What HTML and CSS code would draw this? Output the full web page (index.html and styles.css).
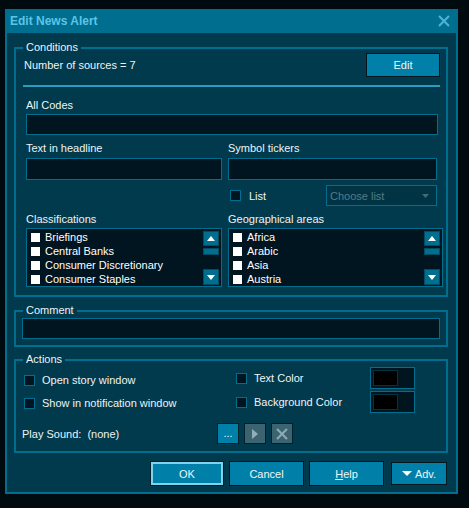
FILE: index.html
```html
<!DOCTYPE html>
<html>
<head>
<meta charset="utf-8">
<link rel="stylesheet" href="styles.css">
</head>
<body>
<div class="window">
  <div class="titlebar">
    <span class="title">Edit News Alert</span>
    <svg class="close" width="12" height="12" viewBox="0 0 12 12"><path d="M1 1L11 11M11 1L1 11" stroke="#4ab2d2" stroke-width="2.2"/></svg>
  </div>
  <div class="body">
    <div class="group conditions">
      <span class="legend">Conditions</span>
      <div class="src-row">
        <span>Number of sources = 7</span>
        <div class="btn edit">Edit</div>
      </div>
      <div class="sep"></div>
      <div class="field full">
        <div class="label">All Codes</div>
        <div class="input h21"></div>
      </div>
      <div class="cols">
        <div class="col col-left">
          <div class="label lb3">Text in headline</div>
          <div class="input"></div>
        </div>
        <div class="col col-right">
          <div class="label lb3">Symbol tickers</div>
          <div class="input"></div>
          <div class="list-row">
            <span class="cb"></span>
            <span class="cb-text">List</span>
            <div class="dropdown">
              <span>Choose list</span>
              <svg width="7" height="4" viewBox="0 0 7 4"><path d="M0 0H7L3.5 4Z" fill="#3d6c7c"/></svg>
            </div>
          </div>
        </div>
      </div>
      <div class="cols lists">
        <div class="col col-left">
          <div class="label">Classifications</div>
          <div class="listbox">
            <div class="items">
              <div class="item"><span class="wcb"></span>Briefings</div>
              <div class="item"><span class="wcb"></span>Central Banks</div>
              <div class="item"><span class="wcb"></span>Consumer Discretionary</div>
              <div class="item"><span class="wcb"></span>Consumer Staples</div>
            </div>
            <div class="scrollbar">
              <div class="sb-btn up"><svg width="8" height="5" viewBox="0 0 8 5"><path d="M0 5H8L4 0Z" fill="#fff"/></svg></div>
              <div class="sb-thumb"></div>
              <div class="sb-btn down"><svg width="8" height="5" viewBox="0 0 8 5"><path d="M0 0H8L4 5Z" fill="#fff"/></svg></div>
            </div>
          </div>
        </div>
        <div class="col col-right wide">
          <div class="label">Geographical areas</div>
          <div class="listbox">
            <div class="items">
              <div class="item"><span class="wcb"></span>Africa</div>
              <div class="item"><span class="wcb"></span>Arabic</div>
              <div class="item"><span class="wcb"></span>Asia</div>
              <div class="item"><span class="wcb"></span>Austria</div>
            </div>
            <div class="scrollbar">
              <div class="sb-btn up"><svg width="8" height="5" viewBox="0 0 8 5"><path d="M0 5H8L4 0Z" fill="#fff"/></svg></div>
              <div class="sb-thumb"></div>
              <div class="sb-btn down"><svg width="8" height="5" viewBox="0 0 8 5"><path d="M0 0H8L4 5Z" fill="#fff"/></svg></div>
            </div>
          </div>
        </div>
      </div>
    </div>

    <div class="group comment">
      <span class="legend">Comment</span>
      <div class="input h21"></div>
    </div>

    <div class="group actions">
      <span class="legend">Actions</span>
      <div class="act-top">
        <div class="act-left">
          <div class="check"><span class="cb"></span><span class="cb-text">Open story window</span></div>
          <div class="check"><span class="cb"></span><span class="cb-text">Show in notification window</span></div>
        </div>
        <div class="act-right">
          <div class="check"><span class="cb"></span><span class="cb-text">Text Color</span><div class="swatch"><span></span></div></div>
          <div class="check"><span class="cb"></span><span class="cb-text">Background Color</span><div class="swatch"><span></span></div></div>
        </div>
      </div>
      <div class="sound-row">
        <span class="sound-label">Play Sound:&nbsp; (none)</span>
        <div class="sbtn dots">...</div>
        <div class="sbtn grey"><svg width="6" height="10" viewBox="0 0 6 10"><path d="M0 0L6 5L0 10Z" fill="#8fb0ba"/></svg></div>
        <div class="sbtn grey"><svg width="12" height="12" viewBox="0 0 12 12"><path d="M1 1L11 11M11 1L1 11" stroke="#8eaab4" stroke-width="2"/></svg></div>
      </div>
    </div>

    <div class="footer">
      <div class="btn fbtn ok">OK</div>
      <div class="btn fbtn cancel">Cancel</div>
      <div class="btn fbtn help"><u>H</u>elp</div>
      <div class="btn fbtn adv"><svg width="10" height="5" viewBox="0 0 10 5"><path d="M0 0H10L5 5Z" fill="#fff"/></svg><span>Adv.</span></div>
    </div>
  </div>
</div>
</body>
</html>
```

FILE: styles.css
```css
* { box-sizing: border-box; }
html, body { margin: 0; padding: 0; }
body {
  background: #000b0f;
  font-family: "Liberation Sans", Arial, sans-serif;
  font-size: 11px;
  color: #eef4f6;
  width: 469px;
  height: 508px;
  overflow: hidden;
}
.window {
  margin: 9px 0 0 5px;
  width: 453px;
  height: 485px;
  background: #006e8e;
  padding: 0 2px 2px;
  display: flex;
  flex-direction: column;
}
.titlebar {
  height: 24px;
  flex: none;
  display: flex;
  align-items: center;
  padding-left: 3px;
  margin: 0 -2px;
  padding-right: 8px;
}
.title {
  font-weight: bold;
  font-size: 12px;
  color: #5ec4e6;
  padding-left: 2px;
}
.close { margin-left: auto; margin-top: -1px; }
.body {
  flex: 1;
  background: #003a4c;
  padding-top: 14px;
}
.group {
  position: relative;
  border: 2px solid #006e8e;
  margin: 0 8px 0 7px;
}
.legend {
  position: absolute;
  top: -9px;
  left: 7px;
  padding: 0 3px;
  line-height: 14px;
  height: 14px;
  background: #003a4c;
}
.conditions { padding: 4px 0 8px 0; }
.src-row {
  display: flex;
  align-items: center;
  justify-content: space-between;
  padding: 0 6px 0 8px;
}
.btn {
  background: #0080a8;
  border: 1px solid #00161e;
  color: #eef6f8;
  display: flex;
  align-items: center;
  justify-content: center;
}
.edit { width: 74px; height: 24px; }
.sep {
  height: 2px;
  background: #2a9cc0;
  margin: 8px 6px 0 7px;
}
.label { height: 14px; line-height: 14px; margin-bottom: 2px; }
.lb3 { margin-bottom: 3px; }
.input {
  height: 22px;
  background: #001520;
  border: 1px solid #006e8e;
}
.input.h21 { height: 21px; }
.full { margin: 11px 0 0 10px; width: 412px; }
.cols {
  display: flex;
  gap: 6px;
  margin: 6px 0 0 10px;
}
.cols.lists { margin-top: 6px; }
.col-left { width: 196px; }
.col-right { width: 209px; }
.col-right.wide { width: 215px; }
.list-row {
  display: flex;
  align-items: center;
  height: 21px;
  margin-top: 5px;
  padding-left: 2px;
}
.cb {
  width: 11px;
  height: 11px;
  flex: none;
  background: #001520;
  border: 1px solid #006e8e;
}
.cb-text { margin-left: 8px; }
.dropdown {
  margin-left: auto;
  width: 111px;
  height: 21px;
  border: 1px solid #006e8e;
  background: #003444;
  color: #587a86;
  display: flex;
  align-items: center;
  justify-content: space-between;
  padding: 0 7px 0 3px;
}
.listbox {
  height: 59px;
  background: #001520;
  border: 1px solid #006e8e;
  display: flex;
}
.items { flex: 1; padding: 1px 0 0 4px; }
.item {
  height: 14px;
  display: flex;
  align-items: center;
  color: #ffffff;
}
.wcb {
  width: 9px;
  height: 9px;
  background: #ffffff;
  margin-right: 5px;
  flex: none;
}
.scrollbar {
  width: 16px;
  margin: 2px 2px 1px 0;
  display: flex;
  flex-direction: column;
}
.sb-btn {
  background: #006e8e;
  border: 1px solid #004c62;
  display: flex;
  align-items: center;
  justify-content: center;
}
.sb-btn.up { height: 15px; }
.sb-btn.down { height: 16px; margin-top: auto; }
.sb-thumb {
  height: 7px;
  margin-top: 2px;
  background: #006e8e;
  border: 1px solid #004c62;
}
.comment { margin-top: 13px; padding: 6px; }
.actions { margin-top: 12px; padding: 6px 0 7px 0; }
.act-top { display: flex; }
.act-left {
  width: 212px;
  margin-left: 8px;
  padding-top: 2px;
  display: flex;
  flex-direction: column;
  gap: 1px;
}
.act-right {
  width: 179px;
  display: flex;
  flex-direction: column;
  gap: 2px;
}
.check { height: 22px; display: flex; align-items: center; }
.act-left .cb-text, .act-right .cb-text { margin-left: 7px; }
.swatch {
  margin-left: auto;
  width: 45px;
  height: 22px;
  border: 1px solid #006e8e;
  background: #001520;
  padding: 2px;
}
.swatch span {
  display: block;
  width: 25px;
  height: 16px;
  background: #000000;
  border: 1px solid #003344;
}
.sound-row {
  display: flex;
  align-items: center;
  margin-top: 9px;
  padding-left: 6px;
  gap: 5px;
}
.sound-label { width: 190px; }
.sbtn {
  width: 22px;
  height: 21px;
  border: 1px solid #00202a;
  display: flex;
  align-items: center;
  justify-content: center;
}
.sbtn.dots { background: #0080a8; color: #e8f4f8; padding-bottom: 2px; }
.sbtn.grey { background: #3c6470; }
.footer {
  display: flex;
  justify-content: flex-end;
  align-items: center;
  margin-top: 8px;
  padding-right: 9px;
}
.fbtn { height: 25px; }
.ok {
  width: 74px;
  box-shadow: inset 0 0 0 2px #7fd4ec;
  border-color: #00202a;
}
.cancel { width: 75px; margin-left: 5px; }
.help { width: 75px; margin-left: 5px; }
.adv {
  width: 56px;
  height: 23px;
  margin-left: 7px;
  gap: 3px;
}
.adv svg { margin-top: -1px; }
```
